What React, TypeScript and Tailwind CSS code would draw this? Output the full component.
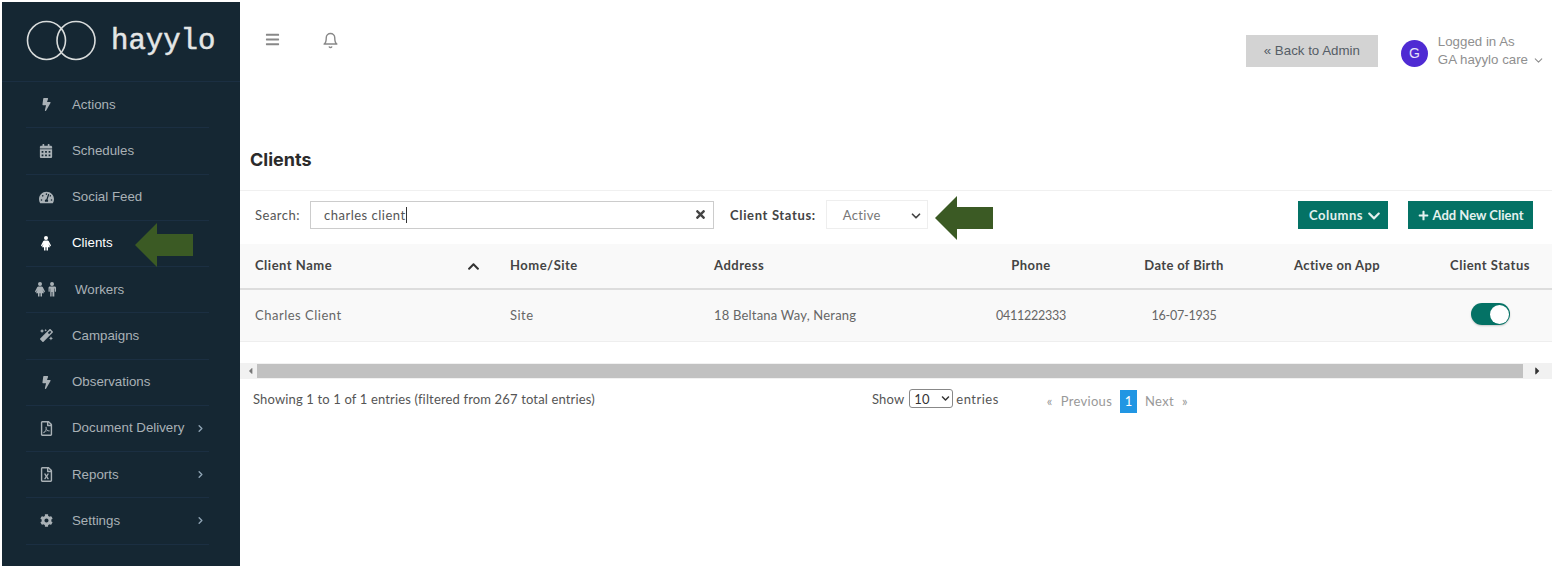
import React from "react";
import { FaBolt, FaCalendarAlt, FaTachometerAlt, FaMagic, FaRegFilePdf, FaRegFileExcel, FaCog, FaChevronUp, FaChevronDown, FaPlus, FaTimes, FaBars, FaCaretLeft, FaCaretRight } from "react-icons/fa";
import { FiBell, FiChevronRight, FiChevronDown } from "react-icons/fi";

function Female({ size = 15 }: { size?: number }) {
  return (
    <svg width={size * 0.8} height={size} viewBox="0 0 12 15" fill="currentColor">
      <circle cx="6" cy="2" r="2" />
      <path d="M4.4 4.4h3.2c.5 0 .9.3 1.1.7l2.2 4.2c.3.7-.6 1.2-1 .6L8.4 7.4 10 11.2H8v3.3H6.5v-3.3h-1v3.3H4v-3.3H2l1.6-3.8-1.5 2.5c-.4.6-1.3.1-1-.6l2.2-4.2c.2-.4.6-.7 1.1-.7z" />
    </svg>
  );
}

function Male({ size = 15 }: { size?: number }) {
  return (
    <svg width={size * 0.67} height={size} viewBox="0 0 10 15" fill="currentColor">
      <circle cx="5" cy="2" r="2" />
      <path d="M2.4 4.4h5.2c.8 0 1.4.6 1.4 1.4v3.4c0 .8-1.2.8-1.2 0V6.4h-.5v8.1H5.4v-4.6h-.8v4.6H3.2V6.4h-.5v2.8c0 .8-1.2.8-1.2 0V5.8c0-.8.6-1.4 1.4-1.4z" />
    </svg>
  );
}

const items: { label: string; icon: React.ReactNode; active?: boolean; more?: boolean; gap?: string }[] = [
  { label: "Actions", icon: <FaBolt className="text-[13px]" /> },
  { label: "Schedules", icon: <FaCalendarAlt className="text-[14px]" /> },
  { label: "Social Feed", icon: <FaTachometerAlt className="text-[15px]" /> },
  { label: "Clients", icon: <Female />, active: true },
  {
    label: "Workers",
    icon: (
      <span className="flex gap-[1px]">
        <Female />
        <Male />
      </span>
    ),
    gap: "pl-[3px]",
  },
  { label: "Campaigns", icon: <FaMagic className="text-[13px]" /> },
  { label: "Observations", icon: <FaBolt className="text-[13px]" /> },
  { label: "Document Delivery", icon: <FaRegFilePdf className="text-[15px]" />, more: true },
  { label: "Reports", icon: <FaRegFileExcel className="text-[15px]" />, more: true },
  { label: "Settings", icon: <FaCog className="text-[13px]" />, more: true },
];

function Arrow({ className }: { className: string }) {
  return (
    <svg className={className} width="58" height="44" viewBox="0 0 58 44">
      <path d="M0 22 L22 0 V11 H58 V33 H22 V44 Z" fill="#3b5a24" />
    </svg>
  );
}

const cols = "grid grid-cols-[270px_204px_230px_174px_132px_174px_1fr] items-center";

export default function App() {
  return (
    <div className="relative flex h-[570px] w-[1557px] overflow-hidden bg-white font-['Lato',sans-serif] text-[13px] tracking-[0.5px] text-[#555]">
      <aside className="ml-[2px] mt-[2px] flex h-[564px] w-[238px] shrink-0 flex-col bg-[#152733] font-['Liberation_Sans',sans-serif] text-[13.3px] tracking-normal text-[#a9b1b6]">
        <div className="flex h-[80px] items-center gap-[14px] border-b border-[#1b2f42] pb-[2px] pl-[24px]">
          <svg width="71" height="42" viewBox="0 0 71 42" fill="none" stroke="#d9dcdc" strokeWidth="1.6">
            <circle cx="20.5" cy="20.5" r="19" />
            <circle cx="50" cy="20.5" r="19" />
          </svg>
          <span className="pt-[2px] font-['Liberation_Mono',monospace] text-[29px] leading-none text-[#e4e6e6] [-webkit-text-stroke:0.5px_#e4e6e6]">hayylo</span>
        </div>
        <nav className="flex flex-col">
          {items.map((it) => (
            <div key={it.label} className="mx-[24px] flex h-[46.25px] w-[183px] items-center border-b border-[#1b2f42]">
              <span className={`flex w-[46px] justify-center pr-[6px] ${it.active ? "text-white" : "text-[#a9b1b6]"}`}>{it.icon}</span>
              <span className={`flex-1 ${it.gap ?? ""} ${it.active ? "text-white" : ""}`}>{it.label}</span>
              {it.more && <FiChevronRight strokeWidth={3} className="mr-[3px] text-[11px] text-[#8ea3b3]" />}
            </div>
          ))}
        </nav>
      </aside>

      <main className="flex min-w-0 flex-1 flex-col">
        <header className="flex h-[150px] items-start">
          <FaBars className="ml-[25px] mt-[32px] text-[15px] text-[#888]" />
          <FiBell className="ml-[42px] mt-[32px] text-[17px] text-[#888]" />
          <div className="ml-auto mr-[12px] mt-[35px] flex items-start font-['Liberation_Sans',sans-serif] text-[13.3px] tracking-normal">
            <button className="flex h-[32px] w-[132px] items-center justify-center bg-[#d3d3d3] text-[#555d66]">« Back to Admin</button>
            <span className="ml-[23px] mt-[5px] flex h-[27px] w-[27px] items-center justify-center rounded-full bg-[#4f2bd3] text-[14px] text-[#e6e2f8]">G</span>
            <div className="-mt-[2px] ml-[10px] flex flex-col font-medium leading-[18px] text-[#8f8f8f]">
              <span>Logged in As</span>
              <span className="flex items-center">GA hayylo care <FiChevronDown className="ml-[4px] text-[13px]" /></span>
            </div>
          </div>
        </header>

        <h1 className="ml-[10px] h-[40px] font-['Inter',sans-serif] text-[18px] font-bold leading-[19px] tracking-normal text-[#2b2b2b]">Clients</h1>

        <div className="mr-[5px] flex h-[54px] items-center border-t border-[#f0f0f0] pb-[6px] pl-[15px] pr-[19px]">
          <span className="mr-[10px] pt-[2px]">Search:</span>
          <div className="flex h-[28px] w-[404px] items-center border border-[#ccc] pl-[13px] pr-[6px]">
            <span className="border-r border-[#333] leading-[16px]">charles client</span>
            <FaTimes className="ml-auto text-[13px] text-[#444]" />
          </div>
          <span className="ml-[16px] mr-[10px] pt-[2px] font-bold tracking-[0.65px] text-[#444]">Client Status:</span>
          <div className="flex h-[29px] w-[102px] items-center border border-[#eee] pl-[16px] pr-[3px] pt-[2px] tracking-[0.3px] text-[#777]">
            Active
            <FiChevronDown strokeWidth={3} className="ml-auto mr-[1px] text-[14px] text-[#444]" />
          </div>
          <button className="ml-auto flex h-[28px] w-[90px] items-center justify-center gap-[4px] bg-[#047265] pl-[4px] pt-[2px] font-bold text-[#e4f1ef]">
            Columns <FaChevronDown className="text-[14px]" />
          </button>
          <button className="ml-[20px] flex h-[28px] w-[125px] items-center justify-center gap-[4px] bg-[#047265] pt-[2px] font-bold tracking-normal text-[#e4f1ef]">
            <FaPlus className="text-[11px]" /> Add New Client
          </button>
        </div>

        <div className="mr-[5px]">
          <div className={`${cols} h-[46px] border-b-2 border-[#ddd] bg-[#f9f9f9] font-bold text-[#444]`}>
            <span className="flex items-center justify-between pl-[15px] pr-[30px]">
              Client Name <FaChevronUp className="text-[13px] text-[#333]" />
            </span>
            <span>Home/Site</span>
            <span>Address</span>
            <span className="text-center">Phone</span>
            <span className="text-center tracking-[0.35px]">Date of Birth</span>
            <span className="text-center tracking-[0.35px]">Active on App</span>
            <span className="pl-[4px] text-center">Client Status</span>
          </div>
          <div className={`${cols} h-[52px] border-b border-[#eee] bg-[#f9f9f9] text-[#666]`}>
            <span className="pl-[15px]">Charles Client</span>
            <span>Site</span>
            <span className="whitespace-nowrap tracking-[0.2px]">18 Beltana Way, Nerang</span>
            <span className="pt-[2px] text-center text-[12.5px] tracking-[-0.25px]">0411222333</span>
            <span className="pt-[2px] text-center text-[12.5px] tracking-[-0.25px]">16-07-1935</span>
            <span />
            <span className="flex justify-center pl-[5px]">
              <span className="-mt-[3px] flex h-[22px] w-[39px] items-center justify-end rounded-full bg-[#047265] pr-[1px] shadow-[0_1px_2px_rgba(0,0,0,0.2)]">
                <span className="h-[19px] w-[19px] rounded-full bg-white" />
              </span>
            </span>
          </div>

          <div className="mt-[21px] flex h-[16px] items-center bg-[#f1f1f1] text-[#555]">
            <FaCaretLeft className="ml-[4px] w-[13px] text-[10px] text-[#777]" />
            <div className="h-[14px] flex-1 bg-[#c1c1c1]" />
            <FaCaretRight className="w-[29px] text-[12px] text-[#333]" />
          </div>
        </div>

        <div className="flex items-start pt-[12px] tracking-[0.15px]">
          <span className="ml-[13px] w-[619px] leading-[16px]">Showing 1 to 1 of 1 entries (filtered from 267 total entries)</span>
          <span className="-mt-[2px] flex items-center gap-[3px] leading-[16px]">
            Show
            <span className="ml-[2px] flex h-[19px] w-[44px] items-center justify-between rounded-[3px] border border-[#888] pl-[4px] pr-[2px] text-[#333]">
              10 <FaChevronDown className="text-[9px]" />
            </span>
            <span className="tracking-[0.5px]">entries</span>
          </span>
          <div className="-mt-[1px] ml-[48px] flex items-center tracking-[0.3px] text-[#999]">
            <span className="mr-[8px]">«</span>
            <span className="mr-[8px]">Previous</span>
            <span className="flex h-[23px] w-[17px] items-center justify-center bg-[#2196e3] text-white">1</span>
            <span className="ml-[8px] mr-[8px]">Next</span>
            <span>»</span>
          </div>
        </div>
      </main>

      <Arrow className="absolute left-[135px] top-[223px]" />
      <Arrow className="absolute left-[935px] top-[196px]" />
    </div>
  );
}
